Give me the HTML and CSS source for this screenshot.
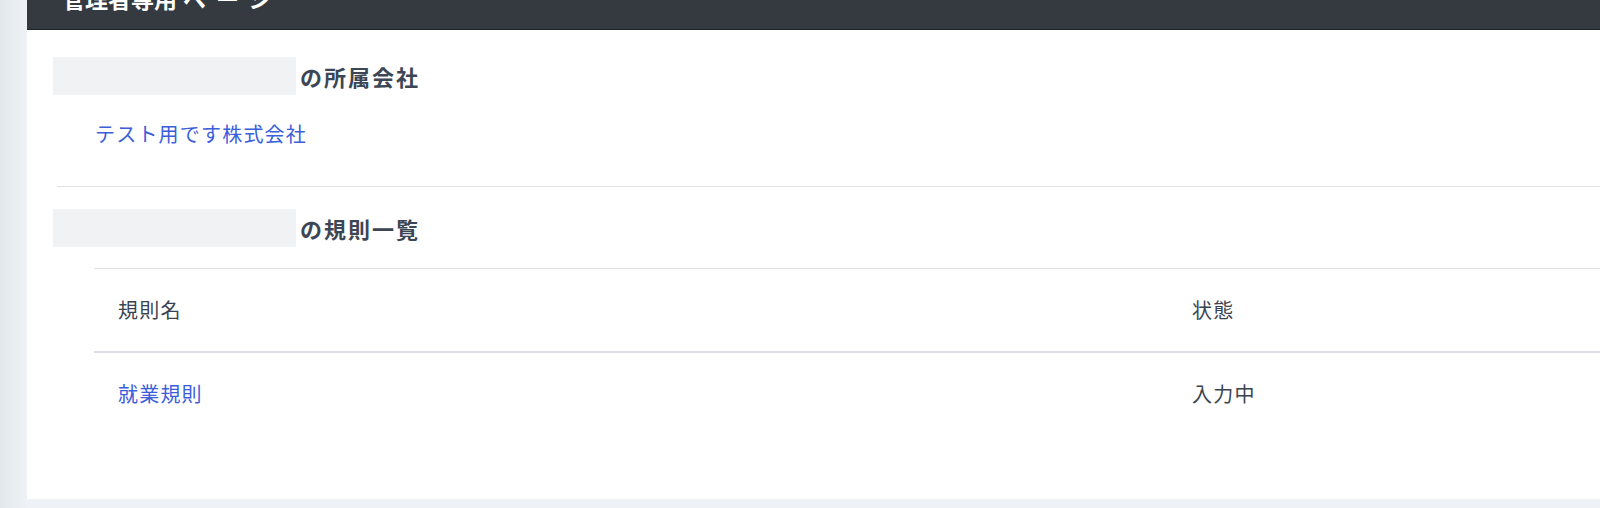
FILE: index.html
```html
<!DOCTYPE html>
<html lang="ja">
<head>
<meta charset="utf-8">
<title>管理者専用ページ</title>
<link rel="stylesheet" href="styles.css">
</head>
<body>
<div class="page">
  <main class="card">
    <header class="topbar">
      <h1 class="topbar-title">管理者専用<span class="kana">ページ</span></h1>
    </header>
    <div class="card-body">
      <section class="section section-company">
        <h2 class="section-title"><span class="redact"></span>の所属会社</h2>
        <a class="company-link" href="#">テスト用です株式会社</a>
      </section>
      <hr class="divider">
      <section class="section section-rules">
        <h2 class="section-title"><span class="redact"></span>の規則一覧</h2>
        <table class="rules-table">
          <thead>
            <tr><th class="col-name">規則名</th><th>状態</th></tr>
          </thead>
          <tbody>
            <tr><td><a class="rule-link" href="#">就業規則</a></td><td>入力中</td></tr>
          </tbody>
        </table>
      </section>
    </div>
  </main>
</div>
</body>
</html>
```

FILE: styles.css
```css
* { box-sizing: border-box; }
html, body {
  margin: 0;
  padding: 0;
}
body {
  background: #eef2f6;
  font-family: "Noto Sans CJK JP", "Noto Sans", sans-serif;
  color: #3a4450;
  overflow: hidden;
}
.page {
  background: linear-gradient(to right, #e3e8ed 0, #eef2f6 27px);
  padding-left: 27px;
  padding-bottom: 9px;
  height: 508px;
}
.card {
  background: #ffffff;
  height: 499px;
  overflow: hidden;
}
.topbar {
  height: 60px;
  margin-top: -30px;
  background: #353a40;
  border-bottom: 1px solid #1f2326;
  padding-left: 35px;
  display: flex;
  align-items: flex-start;
}
.topbar-title {
  margin: 0;
  padding-top: 15px;
  color: #ffffff;
  font-size: 23px;
  line-height: 26px;
  font-weight: 700;
  letter-spacing: 0;
}
.topbar-title .kana {
  letter-spacing: 10px;
  margin-left: 6px;
}
.card-body {
  padding: 27px 0 0 26px;
}
.section-title {
  margin: 0;
  display: flex;
  align-items: center;
  height: 38px;
  font-size: 22px;
  font-weight: 700;
  letter-spacing: 2px;
  color: #3c4654;
}
.redact {
  display: inline-block;
  width: 243px;
  height: 38px;
  background: #f1f2f4;
  margin-right: 4px;
}
.company-link {
  display: block;
  margin: 24px 0 0 42px;
  font-size: 20px;
  line-height: 30px;
  letter-spacing: 1.2px;
  color: #3b5edb;
  text-decoration: none;
}
.divider {
  margin: 37px 0 0 4px;
  border: 0;
  border-top: 1px solid #dfe2e6;
  height: 0;
}
.section-rules {
  margin-top: 22px;
}
.rules-table {
  margin: 21px 0 0 41px;
  width: calc(100% - 41px);
  border-collapse: collapse;
  font-size: 20px;
  letter-spacing: 1.2px;
}
.rules-table th,
.rules-table td {
  text-align: left;
  font-weight: 400;
  padding: 24px 24px;
  line-height: 34px;
  border-top: 1px solid #dfe2e6;
  color: #3a4450;
}
.rules-table thead th {
  border-bottom: 2px solid #dcdde5;
}
.rules-table tbody td {
  border-top: 0;
}
.col-name {
  width: 1074px;
}
.rule-link {
  color: #3b5edb;
  text-decoration: none;
}
```
